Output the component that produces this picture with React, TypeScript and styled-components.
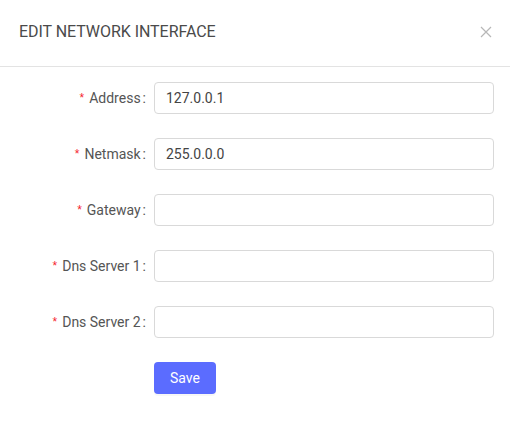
import React from 'react'
import styled, { createGlobalStyle } from 'styled-components'

const GlobalStyle = createGlobalStyle`
  html, body {
    margin: 0;
    padding: 0;
    background: #fff;
  }
  body {
    font-family: Roboto, "Liberation Sans", sans-serif;
    -webkit-font-smoothing: antialiased;
  }
  * {
    box-sizing: border-box;
  }
`

type Field = {
  label: string
  value: string
}

const fields: Field[] = [
  { label: 'Address', value: '127.0.0.1' },
  { label: 'Netmask', value: '255.0.0.0' },
  { label: 'Gateway', value: '' },
  { label: 'Dns Server 1', value: '' },
  { label: 'Dns Server 2', value: '' },
]

const App = () => {
  return (
    <>
      <GlobalStyle />
      <Modal>
        <Header>
          <Title>EDIT NETWORK INTERFACE</Title>
          <CloseButton type="button" aria-label="Close">
            <svg width="12" height="12" viewBox="0 0 12 12">
              <path d="M1 1L11 11M11 1L1 11" stroke="#b7b7b7" strokeWidth="1.2" fill="none" />
            </svg>
          </CloseButton>
        </Header>

        <Body>
          {fields.map((field) => (
            <Row key={field.label}>
              <Label>
                <Required>*</Required>
                {field.label}
                <Colon>:</Colon>
              </Label>
              <Input defaultValue={field.value} />
            </Row>
          ))}
          <Row>
            <Label />
            <SaveButton type="button">Save</SaveButton>
          </Row>
        </Body>
      </Modal>
    </>
  )
}

export default App

const Modal = styled.div`
  width: 510px;
  height: 431px;
  background: #fff;
`
const Header = styled.div`
  display: flex;
  align-items: center;
  justify-content: space-between;
  height: 67px;
  padding: 0 19px 2px 19px;
  border-bottom: 1px solid #e3e3e3;
`
const Title = styled.div`
  font-size: 16px;
  line-height: 24px;
  color: #4a4a4a;
  letter-spacing: -0.05px;
`
const CloseButton = styled.button`
  display: flex;
  align-items: center;
  justify-content: center;
  width: 20px;
  height: 20px;
  margin-right: -5px;
  padding: 0;
  border: none;
  background: none;
  cursor: pointer;
`
const Body = styled.div`
  display: flex;
  flex-direction: column;
  gap: 24px;
  padding: 15px 16px 0 0;
`
const Row = styled.div`
  display: flex;
  align-items: center;
  height: 32px;
`
const Label = styled.label`
  display: flex;
  align-items: center;
  justify-content: flex-end;
  width: 154px;
  flex-shrink: 0;
  padding-right: 8px;
  font-size: 14px;
  color: #555;
  white-space: nowrap;
`
const Required = styled.span`
  margin-right: 5px;
  color: #f5222d;
  font-family: "Liberation Sans", sans-serif;
  font-size: 12px;
  line-height: 1;
`
const Colon = styled.span`
  margin-left: 2px;
`
const Input = styled.input`
  flex: 1;
  height: 32px;
  padding: 4px 11px;
  border: 1px solid #d9d9d9;
  border-radius: 4px;
  font-family: Roboto, "Liberation Sans", sans-serif;
  font-size: 14px;
  color: #444;
  outline: none;
`
const SaveButton = styled.button`
  height: 32px;
  padding: 0 16px;
  border: none;
  border-radius: 4px;
  background: #5b6cff;
  color: #fff;
  font-family: Roboto, "Liberation Sans", sans-serif;
  font-size: 14px;
  box-shadow: 0 2px 0 rgba(0, 0, 0, 0.03);
  cursor: pointer;
`
